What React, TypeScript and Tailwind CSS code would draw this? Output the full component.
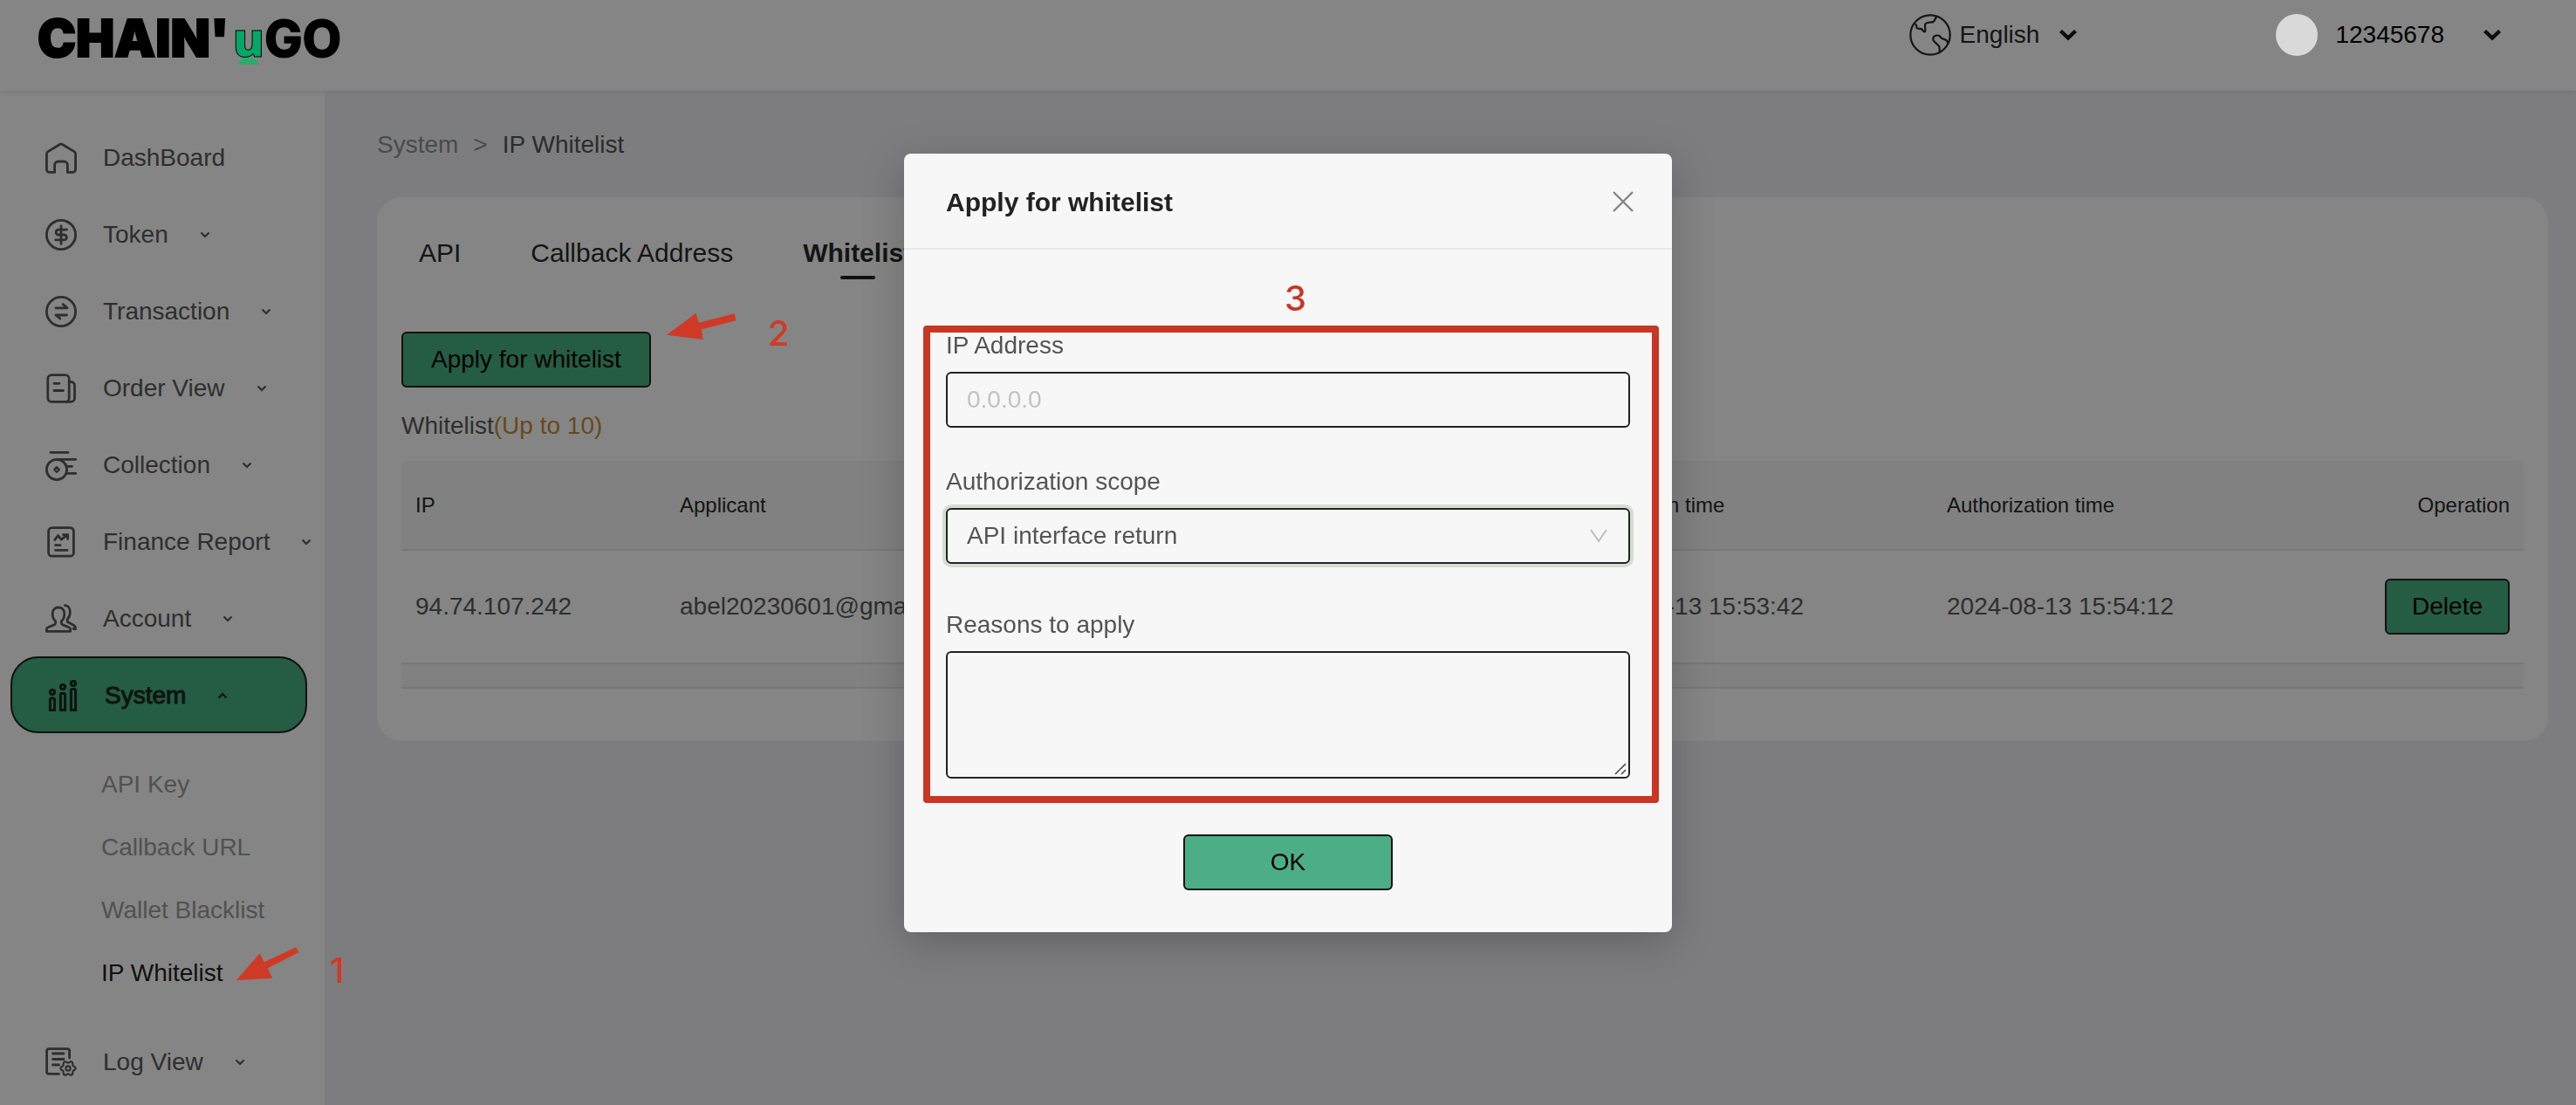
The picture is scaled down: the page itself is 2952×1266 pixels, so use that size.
import React from "react";

const FONT = "font-['Liberation_Sans',Arial,sans-serif]";

type IconProps = { children: React.ReactNode };

function Icon({ children }: IconProps) {
  return (
    <svg
      className="size-9 shrink-0 overflow-visible"
      viewBox="0 0 36 36"
      fill="none"
      stroke="currentColor"
      strokeWidth="2.8"
      strokeLinecap="round"
      strokeLinejoin="round"
      aria-hidden="true"
    >
      {children}
    </svg>
  );
}

// Six-lobed outline of the settings gear.
const gearPath =
  Array.from({ length: 73 }, (_, i) => {
    const a = (i / 72) * Math.PI * 2;
    const r = 7.5 + 1.1 * Math.cos(6 * a);
    return `${i ? "L" : "M"}${(26 + r * Math.cos(a)).toFixed(2)} ${(25 + r * Math.sin(a)).toFixed(2)}`;
  }).join("") + "Z";

const icons = {
  dashboard: (
    <Icon>
      <path d="M16.9 2.3 3 10.6Q1.4 11.6 1.4 13.5V31a3.4 3.4 0 0 0 3.4 3.4h5.8V26a4 4 0 0 1 4-4h6.8a4 4 0 0 1 4 4v8.4h5.8a3.4 3.4 0 0 0 3.4-3.4V13.5q0-1.9-1.6-2.9L19.1 2.3a2 2 0 0 0-2.2 0Z" />
    </Icon>
  ),
  token: (
    <Icon>
      <circle cx="18" cy="18" r="16.6" />
      <path d="M18 8v20.5M24.5 12.2H15a2.9 2.9 0 0 0 0 5.8h6.5a2.9 2.9 0 0 1 0 5.8h-9.8" />
    </Icon>
  ),
  transaction: (
    <Icon>
      <circle cx="18" cy="18" r="16.6" />
      <path d="M12 13.8h13l-4.8-4.2M24.5 22H12l4.8 4" />
    </Icon>
  ),
  order: (
    <Icon>
      <rect x="2.8" y="2.7" width="24.4" height="30.6" rx="4" />
      <path d="M27.2 10.5h2.3a4 4 0 0 1 4 4v14.8a4 4 0 0 1-4 4h-6M10 12.3h6M10 20.5h10.5" />
    </Icon>
  ),
  collection: (
    <Icon>
      <path d="M6 3.4h20M13 11.4h21.7M26 19.3h4.5M25 27.4h9.7" />
      <circle cx="13" cy="23" r="11.6" />
      <path d="m13 20.5 2.500 2.500-2.500 2.500-2.500-2.500Z" />
    </Icon>
  ),
  finance: (
    <Icon>
      <rect x="3.6" y="1.6" width="28.8" height="32.6" rx="4" />
      <path d="m10.8 15.4 3.8-4.8 3.6 4.6 6.4-5M20.5 9.6H25.600v5M11.500 21.600h5.500M11.500 27.400h13.500" />
    </Icon>
  ),
  account: (
    <Icon>
      <path d="M15 5c-4.200 0-6.800 3-6.800 7.200 0 3.600 1.200 6.600 3.400 8.300v2.300c0 1-.5 1.700-1.500 2.100L3 27.700c-1 .4-1.600 1-1.600 2v2.700h27.200v-2.700c0-1-.6-1.600-1.600-2l-7.100-2.800c-1-.4-1.500-1.100-1.500-2.100v-2.300c2.200-1.700 3.400-4.700 3.400-8.300C21.800 8 19.200 5 15 5Z" />
      <path d="M22.300 2.600c4.500.3 6.200 4.200 6 8-.1 3-1 5.700-3 7.600v3.300l6.600 3.400c1.900 1 2.700 2.100 2.700 4.600h-2.500" />
    </Icon>
  ),
  system: (
    <Icon>
      <g strokeLinejoin="miter" strokeWidth="3">
        <circle cx="5" cy="14" r="2.6" />
        <circle cx="17" cy="8" r="2.6" />
        <circle cx="29" cy="4" r="2.6" />
        <path d="M2.400 34.500V22l1-1h3.200l1 1v12.500ZM14.400 34.500V16.500l1-1h3.200l1 1v18ZM26.400 34.500V11.500l1-1h3.200l1 1v23Z" />
      </g>
    </Icon>
  ),
  log: (
    <Icon>
      <path d="M27.600 13V5a2.400 2.400 0 0 0-2.400-2.400H4A2.400 2.400 0 0 0 1.600 5v24A2.400 2.400 0 0 0 4 31.400h11.500M8.500 8h12.500M8.500 14.500h12.500M8.500 21h7" />
      <path d={gearPath} strokeWidth="2.200" />
      <circle cx="26" cy="25" r="2.600" strokeWidth="2.200" />
    </Icon>
  ),
};

function SmallChevron({ up = false }: { up?: boolean }) {
  return (
    <svg
      className={up ? "h-2 w-3 shrink-0 rotate-180" : "h-2 w-3 shrink-0"}
      viewBox="0 0 12 8"
      fill="none"
      stroke="currentColor"
      strokeWidth="2.2"
      aria-hidden="true"
    >
      <path d="m1.500 1.500 4.500 4.500 4.500-4.500" />
    </svg>
  );
}

function BoldChevron() {
  return (
    <svg className="h-4 w-6 shrink-0" viewBox="0 0 24 16" fill="none" stroke="#0c0c0c" strokeWidth="4.400" aria-hidden="true">
      <path d="m3.500 3.500 8.500 8 8.500-8" />
    </svg>
  );
}

function NavItem({
  icon,
  label,
  active = false,
  expandable = true,
}: {
  icon: React.ReactNode;
  label: string;
  active?: boolean;
  expandable?: boolean;
}) {
  return (
    <a
      href="#"
      aria-current={active ? "true" : undefined}
      className={
        active
          ? "mr-5 ml-3 flex h-[88px] items-center rounded-[32px] border-2 border-[#111] bg-[#255c44] pt-px pl-[41px] whitespace-nowrap text-[#0d140f]"
          : "mr-5 ml-3 flex h-[88px] items-center border-2 border-transparent pt-px pl-[38px] whitespace-nowrap text-[#2e2e2e]"
      }
    >
      {icon}
      <span className={active ? "ml-[29px] [-webkit-text-stroke:1px_#0d140f]" : "ml-[30px]"}>{label}</span>
      {expandable && (
        <span className="ml-9 flex shrink-0">
          <SmallChevron up={active} />
        </span>
      )}
    </a>
  );
}

function Logo() {
  return (
    <a href="#" aria-label="Chain'uGo" className="relative flex h-[60px] items-baseline text-black">
      <span className="font-['Inter',sans-serif] text-[59px] leading-[60px] font-black [-webkit-text-stroke:2px_black]">CHAIN&apos;</span>
      <span className="relative ml-1 font-['Open_Sans',sans-serif] text-[54px] leading-[60px] font-extrabold text-[#04a866] [-webkit-text-stroke:1px_black]">
        u
        <svg className="absolute bottom-0 left-[5px] h-2 w-[25px]" viewBox="0 0 25 8" aria-hidden="true">
          <path d="M0 8Q4 0 12.500 0T25 8Z" fill="#2bab68" />
        </svg>
      </span>
      <span className="font-['Inter',sans-serif] text-[58px] leading-[60px] font-extrabold [-webkit-text-stroke:1px_black]">GO</span>
    </a>
  );
}

function Header() {
  return (
    <header className="relative z-10 flex h-[104px] items-start justify-between bg-[#858585] pr-[84px] pl-[43px] shadow-[0_2px_6px_rgba(0,0,0,0.08)]">
      <div className="pt-[14px]">
        <Logo />
      </div>
      <div className="flex h-20 items-center text-[28px]">
        <button type="button" className="flex items-center text-[#141414]">
          <svg className="size-12" viewBox="0 0 48 48" fill="none" stroke="#141414" strokeWidth="2.200" strokeLinejoin="round" aria-hidden="true">
            <circle cx="24" cy="24" r="22.700" />
            <path d="M31.500 2.800c-1.800 2.200-2.300 4.700-4 6.200-2.200 1.400-6.500-.2-8.800 2-2 2-.2 4.500-.4 6.800-.1 1 .4 2.200-.7 2.700-1.300.2-2.200-2.700-4-3.400-1.700-.7-4.300.2-5-1.200-.5-1.500.3-3.500-2-4.500" />
            <path d="M44.500 33.500c-.8-2-1.900-3.900-4-4.400-2.700-.7-4.200-1-5-3-1.200-2.200-4.600-1.900-6.800-.6-1.900 1.200-1.700 4-.5 5.700 1.600 2.300 4.300 3.300 5.800 5.700 1.300 2.600.2 5.200 1 7.600" />
          </svg>
          <span className="ml-[10px]">English</span>
          <span className="ml-[21px]">
            <BoldChevron />
          </span>
        </button>
        <button type="button" className="ml-[226px] flex items-center text-black">
          <span className="size-12 rounded-full bg-[#d9d9d9]" />
          <span className="ml-5">12345678</span>
          <span className="ml-[43px]">
            <BoldChevron />
          </span>
        </button>
      </div>
    </header>
  );
}

function Sidebar() {
  return (
    <nav aria-label="Main" className="w-[372px] shrink-0 bg-[#858585] pt-8 text-[28px]">
      <NavItem icon={icons.dashboard} label="DashBoard" expandable={false} />
      <NavItem icon={icons.token} label="Token" />
      <NavItem icon={icons.transaction} label="Transaction" />
      <NavItem icon={icons.order} label="Order View" />
      <NavItem icon={icons.collection} label="Collection" />
      <NavItem icon={icons.finance} label="Finance Report" />
      <NavItem icon={icons.account} label="Account" />
      <NavItem icon={icons.system} label="System" active />
      <ul className="pt-[23px] pb-[21px] pl-[116px] leading-[72px] text-[#515151]">
        <li>
          <a href="#">API Key</a>
        </li>
        <li>
          <a href="#">Callback URL</a>
        </li>
        <li>
          <a href="#">Wallet Blacklist</a>
        </li>
        <li className="relative">
          <a href="#" className="text-[#101010]">
            IP Whitelist
          </a>
          <svg className="absolute top-[6px] left-[154px] h-10 w-[74px]" viewBox="0 0 74 40" fill="#cf3a26" aria-hidden="true">
            <path d="M.7 38.300 27.700 7.300l5 10L69.300.3l3 6-35.600 18 5.600 11.400Z" />
          </svg>
          <span className="absolute top-[7px] left-[262px] font-['Inter',sans-serif] text-[40px] leading-[52px] font-medium text-[#cf3a26]">
            1
          </span>
        </li>
      </ul>
      <NavItem icon={icons.log} label="Log View" />
    </nav>
  );
}

function GreenButton({ children, className = "" }: { children: React.ReactNode; className?: string }) {
  return (
    <button type="button" className={`h-16 rounded-md border-2 border-[#111] text-[28px] text-black ${className}`}>
      {children}
    </button>
  );
}

function WhitelistTable() {
  return (
    <table className="mt-5 w-full table-fixed border-collapse text-left whitespace-nowrap">
      <colgroup>
        <col className="w-[303px]" />
        <col className="w-[397px]" />
        <col />
        <col className="w-[424px]" />
        <col className="w-[485px]" />
        <col className="w-[192px]" />
      </colgroup>
      <thead>
        <tr className="h-[102px] border-b-2 border-[#777] bg-[#818181] text-2xl text-[#141414]">
          <th className="rounded-tl-lg px-4 font-normal">IP</th>
          <th className="px-4 font-normal">Applicant</th>
          <td />
          <th className="px-4 font-normal">Application time</th>
          <th className="px-4 font-normal">Authorization time</th>
          <th className="rounded-tr-lg px-4 text-right font-normal">Operation</th>
        </tr>
      </thead>
      <tbody>
        <tr className="h-[130px] border-b-2 border-[#777] text-[28px] text-[#2e2e2e]">
          <td className="px-4">94.74.107.242</td>
          <td className="px-4">abel20230601@gmail.com</td>
          <td />
          <td className="px-4">2024-08-13 15:53:42</td>
          <td className="px-4">2024-08-13 15:54:12</td>
          <td className="px-4 text-right">
            <GreenButton className="bg-[#255c44] px-[29px]">Delete</GreenButton>
          </td>
        </tr>
        <tr className="h-7 border-b-2 border-[#777] bg-[#818181]">
          <td colSpan={6} />
        </tr>
      </tbody>
    </table>
  );
}

function MainContent() {
  return (
    <main className="min-w-0 flex-1 bg-[#7d7d7f] pt-[41px] pr-8 pl-[60px]">
      <nav aria-label="Breadcrumb" className="flex gap-[17px] text-[28px] leading-[42px] text-[#4a4a4b]">
        <a href="#">System</a>
        <span>&gt;</span>
        <span className="text-[#2b2b2b]">IP Whitelist</span>
      </nav>
      <section className="mt-[39px] rounded-[28px] bg-[#858585] px-7 pt-[42px] pb-[60px]">
        <div role="tablist" className="flex gap-20 pl-5 text-[30px] leading-[44px] text-[#141414]">
          <button type="button" role="tab">
            API
          </button>
          <button type="button" role="tab">
            Callback Address
          </button>
          <button type="button" role="tab" aria-selected="true" className="relative font-bold">
            Whitelist
            <span className="absolute -bottom-2 left-1/2 h-1 w-10 -translate-x-1/2 rounded-full bg-[#111]" />
          </button>
        </div>
        <div className="relative mt-[68px] w-fit">
          <GreenButton className="bg-[#255c44] px-8">Apply for whitelist</GreenButton>
          <svg className="absolute -top-[22px] left-[304px] h-8 w-20" viewBox="0 0 80 32" fill="#cf3a26" aria-hidden="true">
            <path d="M0 25.700 33.600.7l3.200 11L77.600 1.300l1.700 8L40 19.300 41.700 31Z" />
          </svg>
          <span className="absolute -top-6 left-[420px] font-['Inter',sans-serif] text-[40px] leading-[52px] font-medium text-[#cf3a26]">
            2
          </span>
        </div>
        <p className="mt-6 text-[28px] leading-10 text-[#2e2e2e]">
          Whitelist<span className="text-[#664a1c]">(Up to 10)</span>
        </p>
        <WhitelistTable />
      </section>
    </main>
  );
}

function ApplyDialog() {
  const field = "block w-full rounded-md border-2 border-[#222] bg-[#f7f7f7] px-[22px] text-[28px] text-[#545454] outline-none";
  const label = "mb-2 block leading-[44px]";
  return (
    <div className="fixed inset-0 z-20 flex items-start justify-center pt-44">
      <div
        role="dialog"
        aria-modal="true"
        aria-labelledby="dialog-title"
        className="w-[880px] rounded-lg bg-[#f7f7f7] shadow-[0_12px_48px_rgba(0,0,0,0.22)]"
      >
        <div className="flex h-[110px] items-center justify-between border-b-2 border-[#e8e8e8] pt-[2px] pr-11 pl-12">
          <h2 id="dialog-title" className="text-[30px] font-bold text-[#222]">
            Apply for whitelist
          </h2>
          <button type="button" aria-label="Close" className="p-0">
            <svg className="size-6" viewBox="0 0 24 24" fill="none" stroke="#858585" strokeWidth="2.400" aria-hidden="true">
              <path d="m1 1 22 22M23 1 1 23" />
            </svg>
          </button>
        </div>
        <form className="relative px-12 pt-[88px] pb-12 text-[28px] text-[#545454]" onSubmit={(e) => e.preventDefault()}>
          <div className="pointer-events-none absolute top-[87px] right-[15px] left-[22px] h-[547px] rounded-sm border-8 border-[#c83624]" />
          <span className="absolute top-[30px] left-[436px] font-['Inter',sans-serif] text-[40px] leading-[52px] font-medium text-[#c83624]">
            3
          </span>
          <label htmlFor="ip" className={label}>
            IP Address
          </label>
          <input id="ip" type="text" placeholder="0.0.0.0" className={`${field} h-16 placeholder:text-[#c2c2c2]`} />
          <label htmlFor="scope" className={`${label} mt-10`}>
            Authorization scope
          </label>
          <div className="relative">
            <select id="scope" className={`${field} h-16 appearance-none ring-4 ring-[#d5ddd0]`}>
              <option>API interface return</option>
            </select>
            <svg
              className="pointer-events-none absolute top-6 right-[26px] h-4 w-5"
              viewBox="0 0 20 16"
              fill="none"
              stroke="#bdbdbd"
              strokeWidth="2"
              aria-hidden="true"
            >
              <path d="m1 1 9 13L19 1" />
            </svg>
          </div>
          <label htmlFor="reasons" className={`${label} mt-12`}>
            Reasons to apply
          </label>
          <div className="relative">
            <textarea id="reasons" className={`${field} h-[146px] resize-none`} />
            <svg
              className="pointer-events-none absolute right-1 bottom-1 size-[14px]"
              viewBox="0 0 14 14"
              fill="none"
              stroke="#4a4a4a"
              strokeWidth="1.600"
              aria-hidden="true"
            >
              <path d="M1 13 13 1M8 13l5-5" />
            </svg>
          </div>
          <div className="mt-16 flex justify-center">
            <GreenButton className="w-60 bg-[#4cae86]">OK</GreenButton>
          </div>
        </form>
      </div>
    </div>
  );
}

export default function App() {
  return (
    <div className={`flex h-screen min-h-[700px] flex-col overflow-hidden bg-[#7d7d7f] ${FONT}`}>
      <Header />
      <div className="flex flex-1">
        <Sidebar />
        <MainContent />
      </div>
      <ApplyDialog />
    </div>
  );
}
